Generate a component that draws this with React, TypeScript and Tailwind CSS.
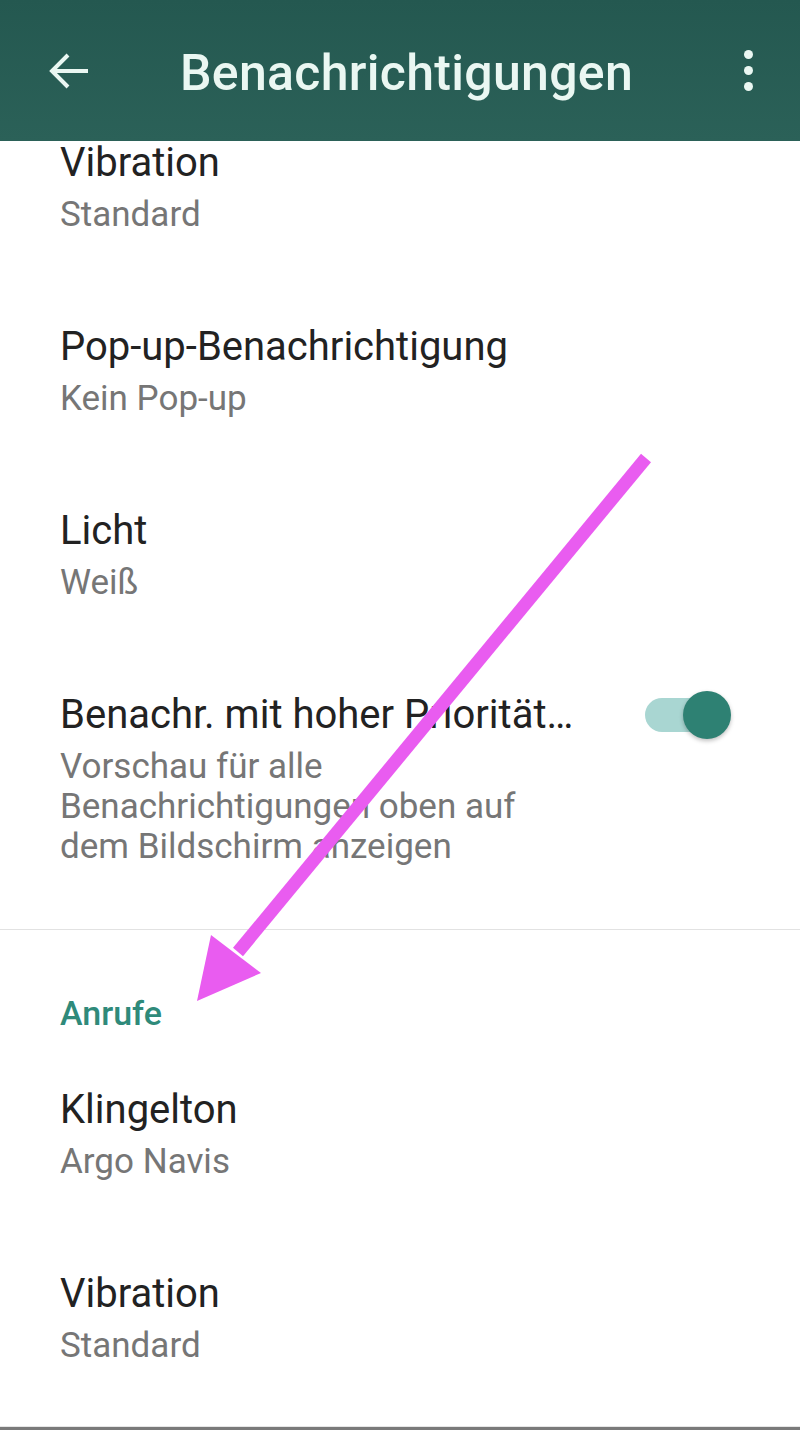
import React from 'react';

const font = { fontFamily: 'Roboto, "Noto Sans", sans-serif' };

type ItemProps = {
  title: string;
  subtitle: React.ReactNode;
  className?: string;
  right?: React.ReactNode;
};

const SettingItem: React.FC<ItemProps> = ({ title, subtitle, className = '', right }) => (
  <div className={`flex items-start pl-[60px] ${className}`}>
    <div className="flex-1 min-w-0">
      <div className="text-[40px] leading-[44px] text-[#222222] whitespace-nowrap">{title}</div>
      <div className="mt-[10px] text-[35px] leading-[40px] text-[#767676]">{subtitle}</div>
    </div>
    {right}
  </div>
);

const Toggle: React.FC = () => (
  <div className="relative mr-[69px] mt-[-2px] h-[48px] w-[86px] shrink-0">
    <div className="absolute left-0 top-[7px] h-[34px] w-[75px] rounded-full bg-[#a9d6d2]" />
    <div className="absolute right-0 top-0 h-[48px] w-[48px] rounded-full bg-[#2e8173] shadow-[0_2px_4px_rgba(0,0,0,0.25)]" />
  </div>
);

const App: React.FC = () => {
  return (
    <div className="relative flex h-[1430px] w-[800px] flex-col overflow-hidden bg-white" style={font}>
      {/* toolbar */}
      <header className="flex h-[141px] shrink-0 items-center bg-gradient-to-b from-[#245850] to-[#2b6158] text-[#eaf7f2]">
        <svg width="40" height="36" viewBox="0 0 40 36" className="ml-[49px]" fill="none" stroke="currentColor" strokeWidth="4">
          <path d="M39 18H3" />
          <path d="M19 2L3 18l16 16" />
        </svg>
        <h1 className="ml-[91px] mt-[4px] text-[50px] font-medium leading-none tracking-[0.3px]">Benachrichtigungen</h1>
        <div className="ml-auto mr-[47px] flex flex-col gap-[7px]">
          <span className="block h-[9px] w-[9px] rounded-full bg-[#eaf7f2]" />
          <span className="block h-[9px] w-[9px] rounded-full bg-[#eaf7f2]" />
          <span className="block h-[9px] w-[9px] rounded-full bg-[#eaf7f2]" />
        </div>
      </header>

      <SettingItem title="Vibration" subtitle="Standard" className="pb-[45px]" />
      <SettingItem title="Pop-up-Benachrichtigung" subtitle="Kein Pop-up" className="py-[45px]" />
      <SettingItem title="Licht" subtitle="Weiß" className="py-[45px]" />
      <SettingItem
        title="Benachr. mit hoher Priorität…"
        subtitle={
          <>
            Vorschau für alle
            <br />
            Benachrichtigungen oben auf
            <br />
            dem Bildschirm anzeigen
          </>
        }
        className="pt-[45px] pb-[62px] border-b border-[#e2e2e2]"
        right={<Toggle />}
      />

      <div className="pl-[60px] pt-[63px] text-[34px] font-medium leading-[40px] text-[#2f8a7a]">Anrufe</div>

      <SettingItem title="Klingelton" subtitle="Argo Navis" className="pt-[55px] pb-[45px]" />
      <SettingItem title="Vibration" subtitle="Standard" className="pt-[45px]" />

      <div className="mt-auto h-[1px] bg-[#e6e6e6]" />
      <div className="h-[3px] bg-[#7a7a7a]" />

      {/* annotation arrow */}
      <svg className="pointer-events-none absolute left-0 top-0" width="800" height="1430" viewBox="0 0 800 1430">
        <line x1="646" y1="458" x2="238" y2="952" stroke="#e95cf0" strokeWidth="13" />
        <polygon points="197,1001 211,935 261,973" fill="#e95cf0" />
      </svg>
    </div>
  );
};

export default App;
